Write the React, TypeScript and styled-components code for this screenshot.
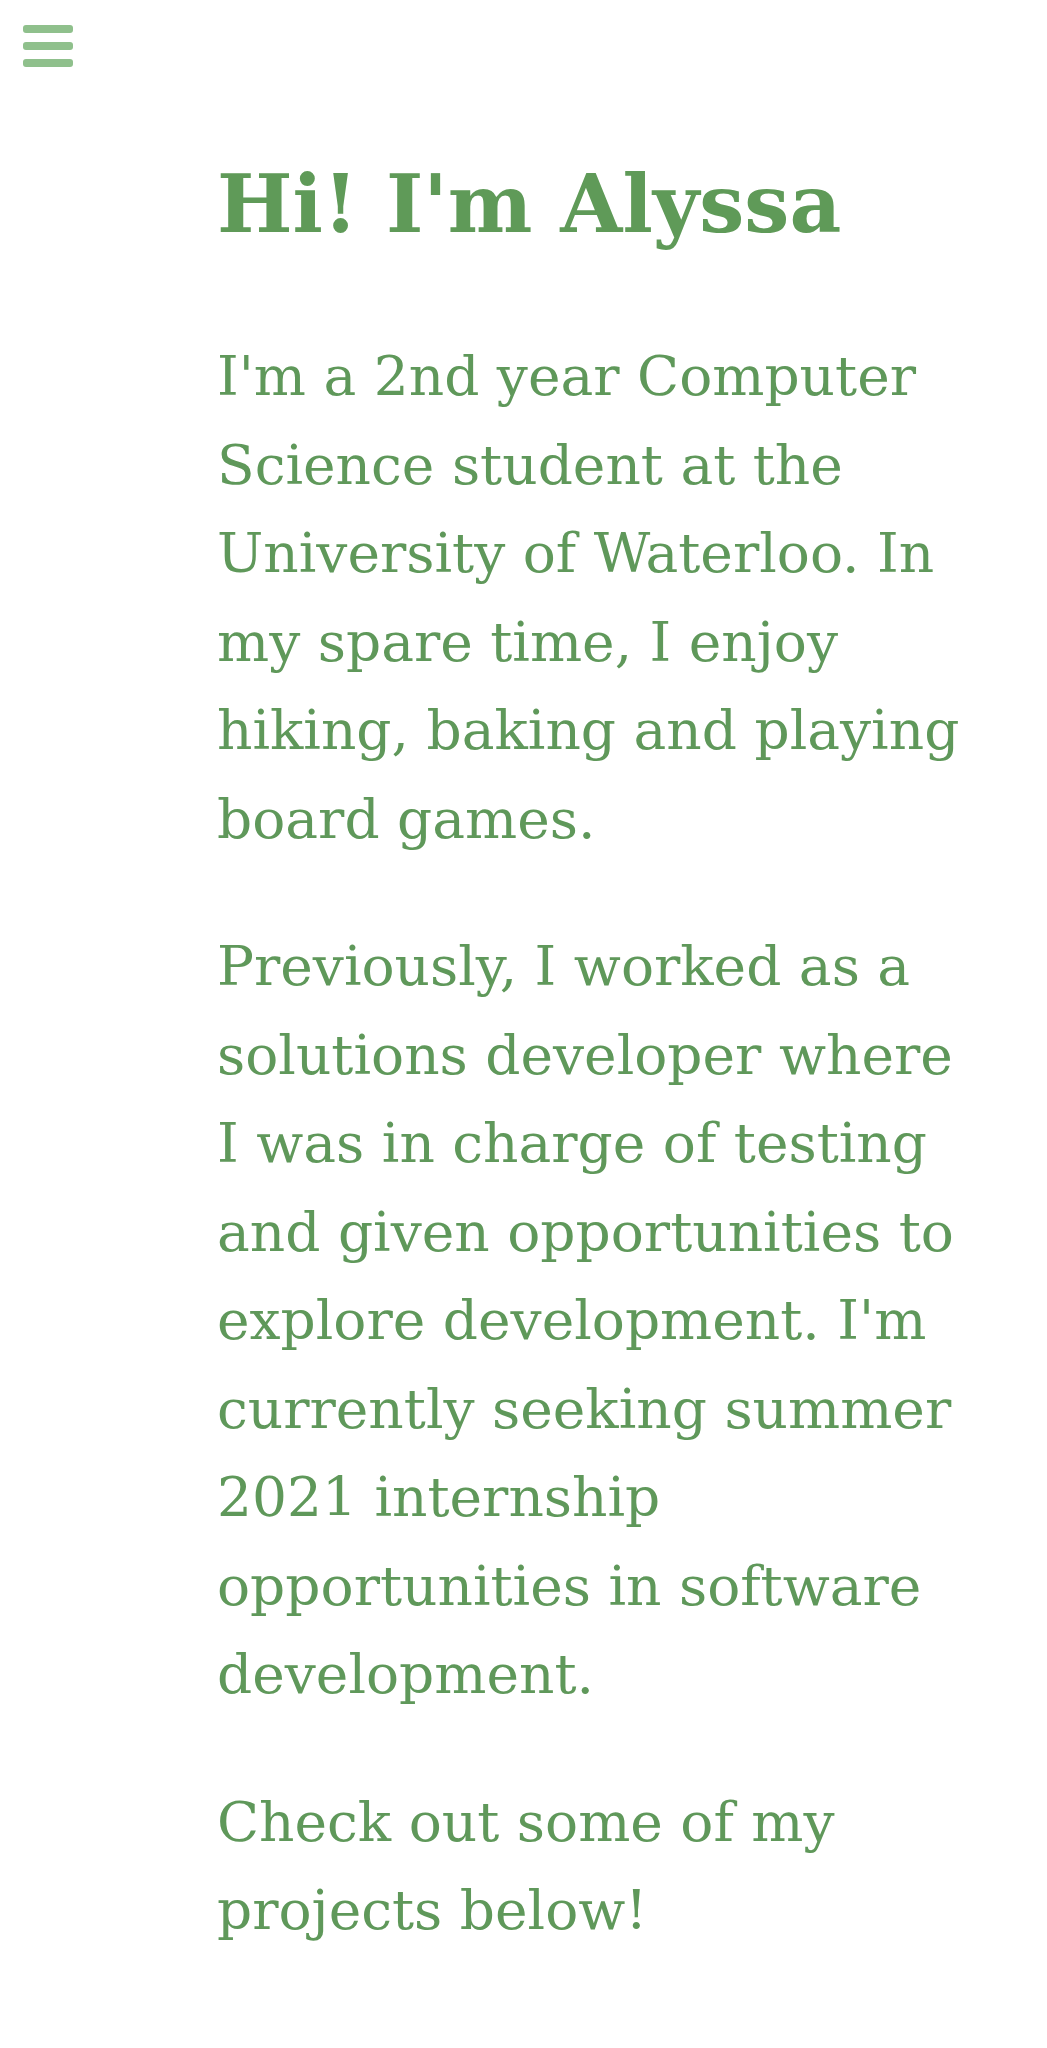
import React from 'react';
import styled, {createGlobalStyle} from 'styled-components';

const GlobalStyle = createGlobalStyle`
  body {
    margin: 0;
    background: #ffffff;
    font-family: "DejaVu Serif", "Liberation Serif", serif;
  }
`;

const Page = styled.div`
  min-height: 2048px;
  background: #ffffff;
`;

const TopBar = styled.header`
  display: flex;
  align-items: center;
  padding: 25px 0 0 23px;
`;

const MenuButton = styled.button`
  display: flex;
  flex-direction: column;
  gap: 9px;
  padding: 0;
  border: none;
  background: none;
  cursor: pointer;
`;

const MenuBar = styled.span`
  display: block;
  width: 50px;
  height: 8px;
  border-radius: 3px;
  background: #8fc08c;
`;

const Main = styled.main`
  padding: 87px 68px 0 217px;
`;

const Heading = styled.h1`
  margin: 0 0 78px;
  font-size: 80px;
  line-height: 100px;
  font-weight: 700;
  color: #5f9a58;
`;

const Paragraph = styled.p`
  margin: 0 0 59px;
  font-size: 55px;
  line-height: 88.5px;
  color: #5f985a;
`;

export default function App() {
  return (
    <Page>
      <GlobalStyle/>
      <TopBar>
        <MenuButton aria-label="menu">
          <MenuBar/>
          <MenuBar/>
          <MenuBar/>
        </MenuButton>
      </TopBar>
      <Main>
        <Heading>Hi! I'm Alyssa</Heading>
        <Paragraph>
          I'm a 2nd year Computer Science student at the University of Waterloo. In my spare time, I enjoy hiking,
          baking and playing board games.
        </Paragraph>
        <Paragraph>
          Previously, I worked as a solutions developer where I was in charge of testing and given opportunities to
          explore development. I'm currently seeking summer 2021 internship opportunities in software development.
        </Paragraph>
        <Paragraph>Check out some of my projects below!</Paragraph>
      </Main>
    </Page>
  );
}
